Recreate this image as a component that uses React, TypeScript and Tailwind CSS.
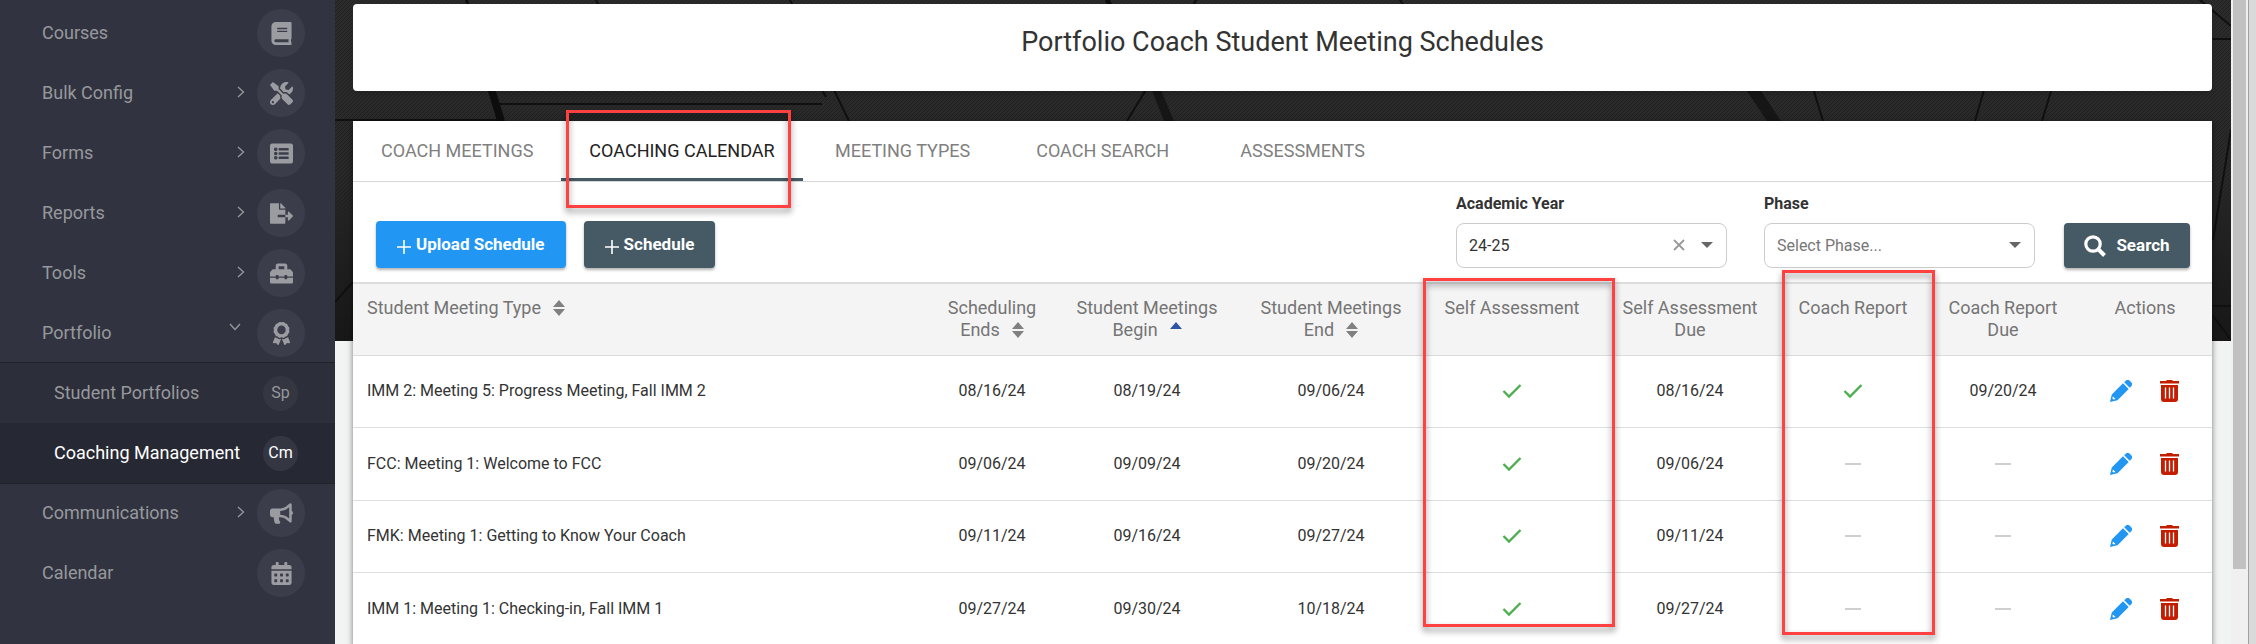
import React from 'react';
import {
  FaAward,
  FaBook,
  FaBullhorn,
  FaCalendarAlt,
  FaFileExport,
  FaListAlt,
  FaTools,
  FaToolbox,
} from 'react-icons/fa';

const menuTop = [
  { name: 'Courses', icon: <FaBook />, arrow: '' },
  { name: 'Bulk Config', icon: <FaTools />, arrow: 'right' },
  { name: 'Forms', icon: <FaListAlt />, arrow: 'right' },
  { name: 'Reports', icon: <FaFileExport />, arrow: 'right' },
  { name: 'Tools', icon: <FaToolbox />, arrow: 'right' },
  { name: 'Portfolio', icon: <FaAward />, arrow: 'down' },
];

const menuBottom = [
  { name: 'Communications', icon: <FaBullhorn />, arrow: 'right' },
  { name: 'Calendar', icon: <FaCalendarAlt />, arrow: '' },
];

const tabs = ['COACH MEETINGS', 'COACHING CALENDAR', 'MEETING TYPES', 'COACH SEARCH', 'ASSESSMENTS'];

const columns = [
  { lines: ['Scheduling', 'Ends'], sort: 'both' },
  { lines: ['Student Meetings', 'Begin'], sort: 'up' },
  { lines: ['Student Meetings', 'End'], sort: 'both' },
  { lines: ['Self Assessment'], sort: '' },
  { lines: ['Self Assessment', 'Due'], sort: '' },
  { lines: ['Coach Report'], sort: '' },
  { lines: ['Coach Report', 'Due'], sort: '' },
  { lines: ['Actions'], sort: '' },
];

const meetings = [
  {
    name: 'IMM 2: Meeting 5: Progress Meeting, Fall IMM 2',
    ends: '08/16/24',
    begin: '08/19/24',
    end: '09/06/24',
    selfDue: '08/16/24',
    report: true,
    reportDue: '09/20/24',
  },
  {
    name: 'FCC: Meeting 1: Welcome to FCC',
    ends: '09/06/24',
    begin: '09/09/24',
    end: '09/20/24',
    selfDue: '09/06/24',
    report: false,
    reportDue: '',
  },
  {
    name: 'FMK: Meeting 1: Getting to Know Your Coach',
    ends: '09/11/24',
    begin: '09/16/24',
    end: '09/27/24',
    selfDue: '09/11/24',
    report: false,
    reportDue: '',
  },
  {
    name: 'IMM 1: Meeting 1: Checking-in, Fall IMM 1',
    ends: '09/27/24',
    begin: '09/30/24',
    end: '10/18/24',
    selfDue: '09/27/24',
    report: false,
    reportDue: '',
  },
];

const MenuItem = ({ name, icon, arrow }: { name: string; icon: React.ReactNode; arrow: string }) => (
  <li>
    <a href="#" className="flex h-15 items-center pl-[42px] pr-[30px]">
      <span className="flex-1">{name}</span>
      {arrow === 'right' && (
        <svg className="mr-3 mb-0.5 h-3 w-2" viewBox="0 0 8 12" fill="none" stroke="currentColor" strokeWidth="1.3">
          <path d="M1 1l5.5 5L1 11" />
        </svg>
      )}
      {arrow === 'down' && (
        <svg className="mr-4 mb-3 h-2 w-3" viewBox="0 0 12 8" fill="none" stroke="currentColor" strokeWidth="1.3">
          <path d="M1 1l5 5.5L11 1" />
        </svg>
      )}
      <span className="flex h-12 w-12 items-center justify-center rounded-full bg-[#3b3e4a] text-[23px] text-[#9b9ca1]">
        {icon}
      </span>
    </a>
  </li>
);

const SubItem = ({ name, short, active }: { name: string; short: string; active?: boolean }) => (
  <li>
    <a
      href="#"
      className={`flex h-15 items-center pl-[54px] pr-[37px] ${active ? 'bg-[#262933] text-white' : ''}`}
    >
      <span className="flex-1">{name}</span>
      <span className="flex h-[35px] w-[35px] items-center justify-center rounded-full bg-[#343742] text-base">
        {short}
      </span>
    </a>
  </li>
);

const SortIcon = ({ sort }: { sort: string }) => (
  <svg className="ml-3 inline-block h-4 w-3 align-[-2px]" viewBox="0 0 12 16" aria-hidden="true">
    <path d="M6 0l6 7H0z" fill={sort === 'up' ? '#2f55a4' : '#808080'} />
    {sort === 'both' && <path d="M6 16l6-7H0z" fill="#808080" />}
  </svg>
);

const Check = () => (
  <svg className="mx-auto h-5 w-5" viewBox="0 0 20 20" fill="none" stroke="#4caf50" strokeWidth="2.4" aria-label="Yes">
    <path d="M1.500 10l5.500 5.500L18.500 4" />
  </svg>
);

const Dash = () => <span className="mx-auto block h-0.5 w-4 bg-[#cfcfcf]" />;

const Caret = () => (
  <svg className="pointer-events-none absolute right-3.5 top-[19px] h-1.5 w-3" viewBox="0 0 12 6" aria-hidden="true">
    <path d="M0 0h12L6 6z" fill="#666" />
  </svg>
);

const Plus = () => (
  <svg className="mt-1 h-3.5 w-3.5" viewBox="0 0 14 14" stroke="currentColor" strokeWidth="1.6" aria-hidden="true">
    <path d="M7 0v14M0 7h14" />
  </svg>
);

const Backdrop = () => (
  <svg className="absolute inset-x-0 top-0 h-[341px] w-full" viewBox="0 0 1896 341" preserveAspectRatio="none" aria-hidden="true">
    <defs>
      <linearGradient id="shade" x1="0" y1="0" x2="0" y2="1">
        <stop offset="0" stopColor="#2b2b2b" />
        <stop offset=".5" stopColor="#292929" />
        <stop offset="1" stopColor="#161616" />
      </linearGradient>
      <pattern id="weave" width="4" height="4" patternUnits="userSpaceOnUse">
        <path d="M0 4L4 0" stroke="#1d1d1d" strokeWidth=".7" />
      </pattern>
    </defs>
    <rect width="1896" height="341" fill="url(#shade)" />
    <rect width="1896" height="341" fill="url(#weave)" />
    <g stroke="#101010" strokeWidth="2" fill="none">
      <path d="M160 102l2 2h325M0 120h162M486 88l5 9M498 88l16 33M0 302l18-20" />
      <path d="M864 -6l-6 12M1065 0l4 6M1478 88l10 33M1717 88l-10 33" />
      <path d="M812 88l-20 33M1649 90l-9 31M1865 0l31 26M1878 39h18M1896 130l-18 110" />
      <path d="M1878 306h18M1878 316l18 24M261 0l3 6M455 0l3 6" />
    </g>
    <path d="M152 88h8l10 33h-8zM130 0h3l2 6h-3zM770 0h5l3 6h-6z" fill="#0d0d0d" />
    <path d="M816 88h9l14 33h-10zM1410 88h14l22 33h-14z" fill="#161616" />
  </svg>
);

const App = () => {
  return (
    <div className="flex h-screen overflow-hidden bg-[#f2f3f3] font-[Roboto,sans-serif] text-lg text-[#757575]">
      <nav className="w-[335px] shrink-0 bg-[#313440] pt-[3px] text-lg text-[#97989c]">
        <ul>
          {menuTop.map((item) => (
            <MenuItem key={item.name} {...item} />
          ))}
        </ul>
        <ul className="-mt-px border-y border-[#20222a] bg-[#2c2e3a]">
          <SubItem name="Student Portfolios" short="Sp" />
          <SubItem name="Coaching Management" short="Cm" active />
        </ul>
        <ul className="-mt-px">
          {menuBottom.map((item) => (
            <MenuItem key={item.name} {...item} />
          ))}
        </ul>
      </nav>

      <main className="relative min-w-0 flex-1 overflow-hidden pl-[18px] pr-[19px] pt-1">
        <Backdrop />
        <header className="relative h-[87px] rounded bg-white pt-5 text-center shadow-md">
          <h1 className="text-[27px] leading-9 text-[#333]">Portfolio Coach Student Meeting Schedules</h1>
        </header>

        <section className="relative mt-[30px] bg-white shadow-[0_2px_6px_rgba(0,0,0,0.5)]">
          <div role="tablist" className="flex h-[61px] border-b border-[#d6d6d6]">
            {tabs.map((tab, index) => (
              <button
                key={tab}
                role="tab"
                aria-selected={index === 1}
                className={`relative min-w-[200px] px-7 ${
                  index === 1 ? 'border-b-3 border-[#455a64] pt-[3px] text-[#222]' : 'text-[#808080]'
                }`}
              >
                {tab}
                {index === 1 && (
                  <span className="pointer-events-none absolute left-[5px] -top-[11px] z-10 h-[98px] w-[225px] border-3 border-[#ff4141] drop-shadow-[0_4px_3px_rgba(0,0,0,0.45)]" />
                )}
              </button>
            ))}
          </div>

          <div className="flex items-end pl-[23px] pr-[22px] pb-3.5 pt-2.5">
            <div className="flex flex-1 gap-[18px]">
              <button className="flex h-[47px] items-center gap-[5px] rounded bg-[#2196f3] px-[21px] text-[17px] font-bold text-white shadow-[0_2px_3px_rgba(0,0,0,0.3)]">
                <Plus />
                Upload Schedule
              </button>
              <button className="flex h-[47px] items-center gap-[5px] rounded bg-[#455a64] px-[21px] text-[17px] font-bold text-white shadow-[0_2px_3px_rgba(0,0,0,0.3)]">
                <Plus />
                Schedule
              </button>
            </div>
            <div className="mr-[37px] w-[271px]">
              <label htmlFor="year" className="mb-[7px] block text-base font-bold text-[#333]">
                Academic Year
              </label>
              <div className="relative">
                <select id="year" className="h-[45px] w-full appearance-none rounded-lg border border-[#ccc] bg-white px-3 text-base text-[#333]">
                  <option>24-25</option>
                </select>
                <button aria-label="Clear academic year" className="absolute right-[42px] top-4">
                  <svg className="h-3 w-3" viewBox="0 0 12 12" stroke="#999" strokeWidth="1.8">
                    <path d="M1 1l10 10M11 1L1 11" />
                  </svg>
                </button>
                <Caret />
              </div>
            </div>
            <div className="mr-[29px] w-[271px]">
              <label htmlFor="phase" className="mb-[7px] block text-base font-bold text-[#333]">
                Phase
              </label>
              <div className="relative">
                <select id="phase" className="h-[45px] w-full appearance-none rounded-lg border border-[#ccc] bg-white px-3 text-base text-[#777]">
                  <option>Select Phase...</option>
                </select>
                <Caret />
              </div>
            </div>
            <button className="flex h-[45px] w-[126px] items-center justify-center gap-2.5 rounded bg-[#455a64] text-[17px] font-bold text-white shadow-[0_2px_3px_rgba(0,0,0,0.3)]">
              <svg className="h-[22px] w-[22px]" viewBox="0 0 22 22" fill="none" stroke="currentColor" aria-hidden="true">
                <circle cx="9" cy="9" r="7.200" strokeWidth="3.2" />
                <path d="M14 14l6.500 6.500" strokeWidth="4" />
              </svg>
              Search
            </button>
          </div>

          <table className="w-full table-fixed border-collapse text-center">
            <colgroup>
              <col />
              <col className="w-[124px]" />
              <col className="w-[186px]" />
              <col className="w-[182px]" />
              <col className="w-[180px]" />
              <col className="w-[176px]" />
              <col className="w-[150px]" />
              <col className="w-[150px]" />
              <col className="w-[134px]" />
            </colgroup>
            <thead>
              <tr className="h-[72px] border-b border-t-2 border-[#ddd] bg-[#f4f4f4] align-top leading-[22px]">
                <th className="pl-3.5 pt-[13px] text-left font-normal">
                  Student Meeting Type
                  <SortIcon sort="both" />
                </th>
                {columns.map((col) => (
                  <th key={col.lines.join(' ')} className="pt-[13px] font-normal">
                    {col.lines.map((line, index) => (
                      <span key={line} className="block whitespace-nowrap">
                        {line}
                        {col.sort && index === 1 && <SortIcon sort={col.sort} />}
                      </span>
                    ))}
                  </th>
                ))}
              </tr>
            </thead>
            <tbody className="text-base text-[#333]">
              {meetings.map((m) => (
                <tr key={m.name} className="border-b border-[#dcdee2] odd:h-[72px] even:h-[73px]">
                  <td className="pl-3.5 text-left">{m.name}</td>
                  <td>{m.ends}</td>
                  <td>{m.begin}</td>
                  <td>{m.end}</td>
                  <td><Check /></td>
                  <td>{m.selfDue}</td>
                  <td>{m.report ? <Check /> : <Dash />}</td>
                  <td>{m.reportDue || <Dash />}</td>
                  <td className="pr-0.5">
                    <div className="flex justify-center gap-7">
                      <button aria-label="Edit">
                        <svg className="h-[22px] w-[22px]" viewBox="0 0 22 22" fill="#2196f3">
                          <path d="M0 22l1.800-7.500L13 3.300l5.700 5.700L7.500 20.200zM14.200 2.300L15.500 1a3.200 3.200 0 0 1 4.500 0l1 1a3.200 3.200 0 0 1 0 4.500L19.700 7.800z" />
                          <path d="M2.900 16.500l2.600 2.600-2 .5-1.100-1.100z" fill="#fff" />
                        </svg>
                      </button>
                      <button aria-label="Delete">
                        <svg className="h-[22px] w-[19px]" viewBox="0 0 19 22" fill="#c41e00">
                          <path d="M0 1h6L7 0h5l1 1h6v2.500H0zM1 5h17v14a3 3 0 0 1-3 3H4a3 3 0 0 1-3-3z" />
                          <path d="M5.500 7.500v11M9.500 7.500v11M13.500 7.500v11" stroke="#fff" strokeWidth="1.300" />
                        </svg>
                      </button>
                    </div>
                  </td>
                </tr>
              ))}
            </tbody>
          </table>

          {/* column highlights */}
          <div className="pointer-events-none absolute right-[597px] top-[157px] h-[349px] w-[192px] border-3 border-[#ff4141] drop-shadow-[0_4px_3px_rgba(0,0,0,0.45)]" />
          <div className="pointer-events-none absolute right-[277px] top-[149px] h-[365px] w-[153px] border-3 border-[#ff4141] drop-shadow-[0_4px_3px_rgba(0,0,0,0.45)]" />
        </section>
      </main>

      <div className="flex w-[17px] shrink-0 justify-center bg-[#f0f0f0]">
        <div className="h-[569px] w-[13px] bg-[#c1c1c1]" />
      </div>
      <div className="w-2 shrink-0 border-l border-[#a0a0a0] bg-[#dadada]" />
    </div>
  );
};

export default App;
